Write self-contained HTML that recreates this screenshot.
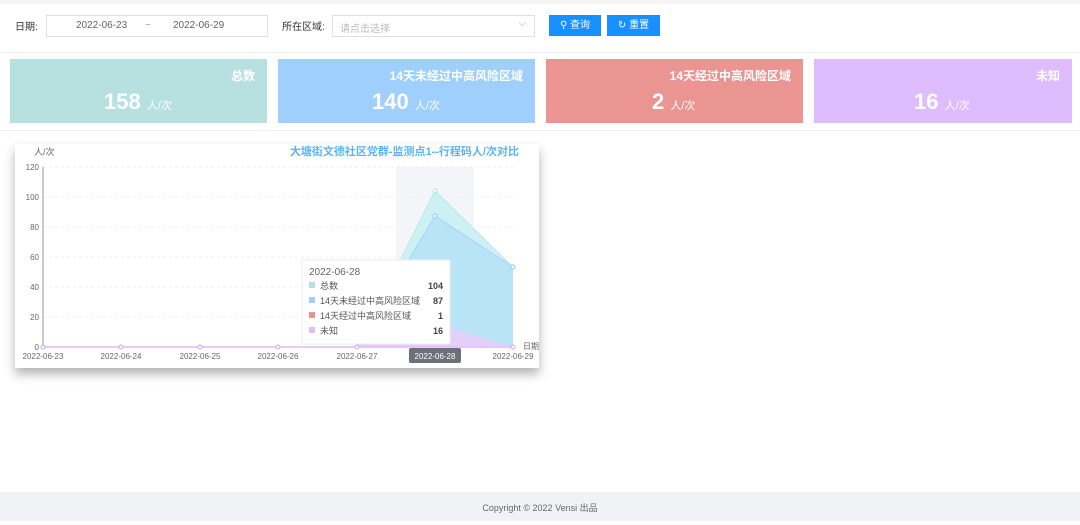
<!DOCTYPE html>
<html><head><meta charset="utf-8"><style>
body{margin:0;width:1080px;height:521px;position:relative;font-family:"Liberation Sans","Noto Sans CJK SC",sans-serif;background:#fff;overflow:hidden;color:#333}
.a{position:absolute}
.top{left:0;top:0;width:1080px;height:4px;background:#f6f6f6}
.lbl{font-size:10px;color:#333}
.inp{border:1px solid #dcdfe6;height:20px;background:#fff;font-size:10px;color:#606266}
.btn{background:#1890ff;color:#fff;font-size:10px;height:21px;line-height:21px;text-align:center}
.card{top:59px;height:64px;color:#fff}
.card .t{position:absolute;right:12px;top:8px;font-size:12px;font-weight:bold}
.card .n{position:absolute;top:30px;font-size:22px;font-weight:bold;white-space:nowrap}
.card .n span{font-size:11px;font-weight:normal}
.foot{left:0;top:492px;width:1080px;height:29px;background:#f0f2f5;font-size:9px;color:#666;text-align:center;line-height:33px}
</style></head><body>
<div class="a top"></div>
<div class="a lbl" style="left:15px;top:18px">日期:</div>
<div class="a inp" style="left:46px;top:15px;width:220px"><span class="a" style="left:29px;top:4px">2022-06-23</span><span class="a" style="left:98px;top:4px;color:#999">~</span><span class="a" style="left:126px;top:4px">2022-06-29</span></div>
<div class="a lbl" style="left:282px;top:18px">所在区域:</div>
<div class="a inp" style="left:332px;top:15px;width:201px"><span class="a" style="left:7px;top:4px;color:#bbb">请点击选择</span><span class="a" style="right:8px;top:2px;color:#aaa">⌵</span></div>
<div class="a btn" style="left:549px;top:15px;width:52px">&#9906; 查询</div>
<div class="a btn" style="left:607px;top:15px;width:53px">↻ 重置</div>
<div class="a" style="left:0;top:52px;width:1080px;height:1px;background:#eee"></div>
<div class="a card" style="left:10px;width:257px;background:#b7e1e0"><div class="t">总数</div><div class="n" style="left:94px">158 <span>人/次</span></div></div>
<div class="a card" style="left:278px;width:257px;background:#9ecffd"><div class="t">14天未经过中高风险区域</div><div class="n" style="left:94px">140 <span>人/次</span></div></div>
<div class="a card" style="left:546px;width:257px;background:#eb9593"><div class="t">14天经过中高风险区域</div><div class="n" style="left:106px">2 <span>人/次</span></div></div>
<div class="a card" style="left:814px;width:258px;background:#dfbcfe"><div class="t">未知</div><div class="n" style="left:100px">16 <span>人/次</span></div></div>
<div class="a" style="left:0;top:130px;width:1080px;height:1px;background:#eee"></div>
<div class="a" style="left:15px;top:144px;width:524px;height:224px;background:#fff;box-shadow:0 6px 10px rgba(0,0,0,.3)"></div>
<svg class="a" style="left:0;top:140px" width="545" height="240" font-family="Liberation Sans, Noto Sans CJK SC, sans-serif">
<text x="34" y="15" font-size="9" fill="#666">人/次</text>
<text x="519" y="15" font-size="11" font-weight="bold" fill="#5cb3f5" text-anchor="end">大塘街文德社区党群-监测点1--行程码人/次对比</text>
<rect x="396" y="27" width="78" height="180" fill="#f3f5f9"/>
<g stroke="#eee" stroke-dasharray="3,3"><line x1="43" x2="513" y1="27" y2="27"/><line x1="43" x2="513" y1="57" y2="57"/><line x1="43" x2="513" y1="87" y2="87"/><line x1="43" x2="513" y1="117" y2="117"/><line x1="43" x2="513" y1="147" y2="147"/><line x1="43" x2="513" y1="177" y2="177"/></g>
<g font-size="8" fill="#666" text-anchor="end"><text x="39" y="30">120</text><text x="39" y="60">100</text><text x="39" y="90">80</text><text x="39" y="120">60</text><text x="39" y="150">40</text><text x="39" y="180">20</text><text x="39" y="210">0</text></g>
<line x1="43" x2="43" y1="27" y2="207" stroke="#999"/>
<polygon points="357,207 435,51 513,127 513,207" fill="#cdf0f2"/>
<polygon points="357,207 435,76 513,127 513,207" fill="#b9e4f8"/>
<polygon points="357,207 435,183 513,207" fill="#e3d0fa"/>
<polyline points="357,207 435,51 513,127" fill="none" stroke="#b7e9ee"/>
<polyline points="357,207 435,76 513,127" fill="none" stroke="#a5d4f8"/>
<line x1="43" x2="513" y1="207" y2="207" stroke="#e5b8f5" stroke-width="1.5"/>
<g fill="#fff" stroke="#c9a6f5"><circle cx="43" cy="207" r="2"/><circle cx="121" cy="207" r="2"/><circle cx="200" cy="207" r="2"/><circle cx="278" cy="207" r="2"/><circle cx="357" cy="207" r="2"/><circle cx="513" cy="207" r="2"/></g>
<circle cx="435" cy="51" r="2" fill="#fff" stroke="#a9e3ea"/><circle cx="435" cy="76" r="2" fill="#fff" stroke="#8ecaf6"/><circle cx="513" cy="127" r="2" fill="#fff" stroke="#8ecaf6"/>
<g font-size="8" fill="#666" text-anchor="middle"><text x="43" y="219">2022-06-23</text><text x="121" y="219">2022-06-24</text><text x="200" y="219">2022-06-25</text><text x="278" y="219">2022-06-26</text><text x="357" y="219">2022-06-27</text><text x="513" y="219">2022-06-29</text></g>
<text x="523" y="209" font-size="8" fill="#666">日期</text>
<rect x="409" y="208" width="52" height="15" rx="2" fill="#6e7079"/><text x="435" y="219" font-size="8" fill="#fff" text-anchor="middle">2022-06-28</text>
<rect x="302" y="120" width="148" height="84" fill="#fff" stroke="#eee"/>
<text x="309" y="135" font-size="10" fill="#666">2022-06-28</text>
<g font-size="9" fill="#555"><rect x="309" y="142" width="6" height="6" fill="#b7e1e0"/><text x="320" y="149">总数</text>
<rect x="309" y="157" width="6" height="6" fill="#9ecffd"/><text x="320" y="164">14天未经过中高风险区域</text>
<rect x="309" y="172" width="6" height="6" fill="#eb9593"/><text x="320" y="179">14天经过中高风险区域</text>
<rect x="309" y="187" width="6" height="6" fill="#dfbcfe"/><text x="320" y="194">未知</text></g>
<g font-size="9" font-weight="bold" fill="#444" text-anchor="end"><text x="443" y="149">104</text><text x="443" y="164">87</text><text x="443" y="179">1</text><text x="443" y="194">16</text></g>
</svg>
<div class="a foot">Copyright © 2022 Vensi 出品</div>
</body></html>
